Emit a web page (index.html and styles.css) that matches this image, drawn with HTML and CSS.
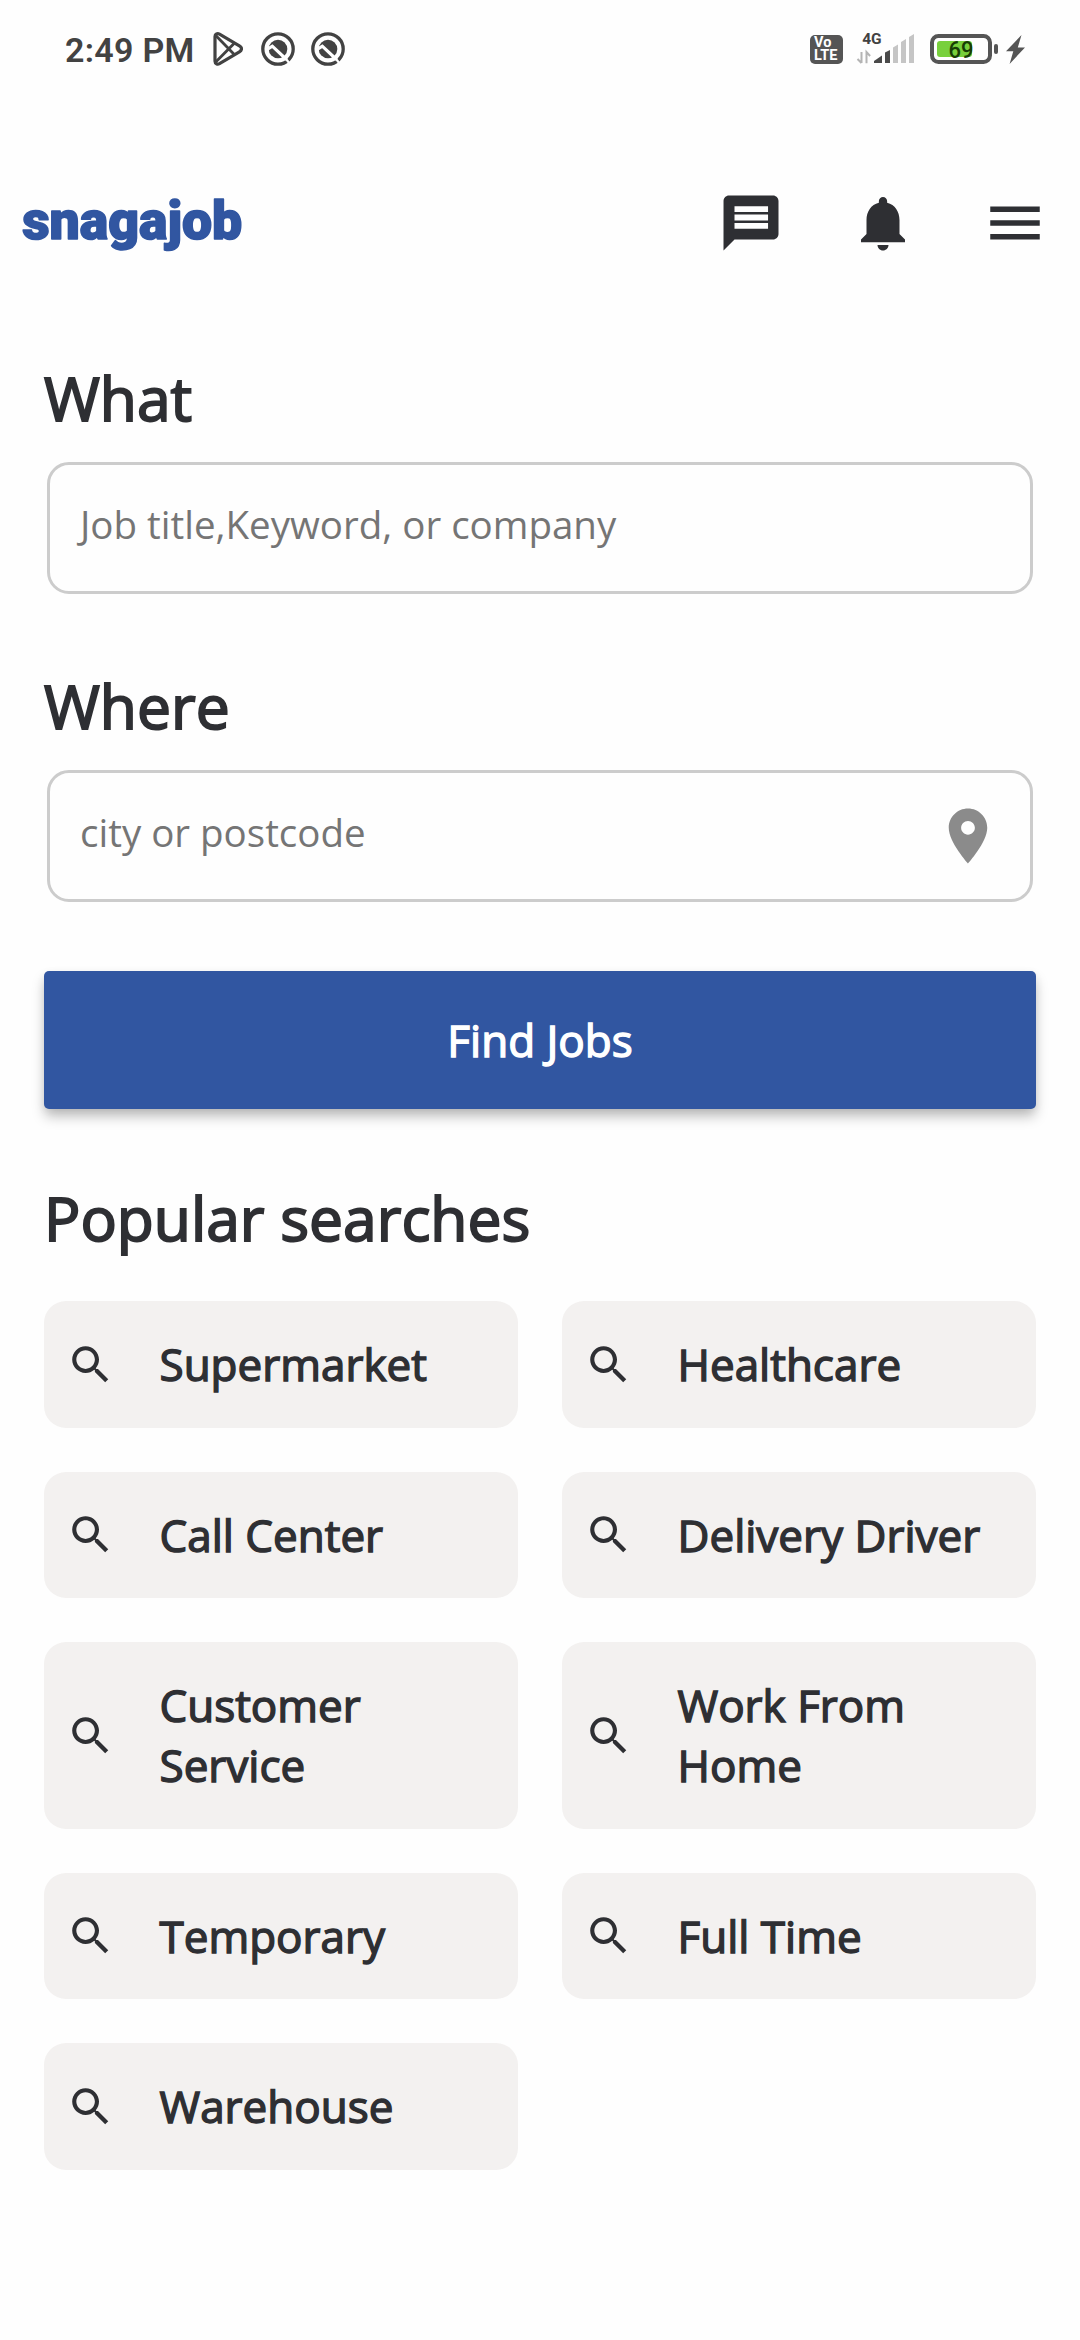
FILE: index.html
```html
<!DOCTYPE html>
<html lang="en">
<head>
<meta charset="utf-8">
<title>Snagajob</title>
<link rel="stylesheet" href="styles.css">
</head>
<body>
<svg class="defs" width="0" height="0" aria-hidden="true">
  <symbol id="search" viewBox="0 0 24 24"><path d="M15.5 14h-.79l-.28-.27C15.41 12.59 16 11.11 16 9.5 16 5.91 13.09 3 9.5 3S3 5.91 3 9.5 5.91 16 9.5 16c1.61 0 3.09-.59 4.23-1.57l.27.28v.79l5 4.99L20.49 19l-4.99-5zm-6 0C7.01 14 5 11.99 5 9.5S7.01 5 9.5 5 14 7.01 14 9.5 11.99 14 9.5 14z"/></symbol>
  <symbol id="appmark" viewBox="0 0 34 34">
    <circle cx="17" cy="17" r="15.200" fill="none" stroke="#424242" stroke-width="3.300"/>
    <circle cx="17" cy="17" r="9.300" fill="#424242"/>
    <path d="M5 18.200L11.300 14.200 25.500 27.500" fill="none" stroke="#fefefe" stroke-width="3.200"/>
    <path d="M24 25.500L28.500 31.500" stroke="#fefefe" stroke-width="2.200"/>
  </symbol>
</svg>

<div class="statusbar">
  <div class="status-left">
    <span class="time">2:49 PM</span>
    <svg class="play" viewBox="0 0 30 34" fill="none" stroke="#424242" stroke-width="3.200" stroke-linejoin="round">
      <path d="M2 4.500C2 2 4.400 1 6.500 2.100L26.400 13.800C29.200 15.400 29.200 18.200 26.400 19.800L6.500 31.600C4.400 32.700 2 31.600 2 29.200z"/>
      <path d="M3 3.800L21.300 22.400M3 29.800L21.300 11.200" stroke-width="2.800"/>
    </svg>
    <svg class="mark"><use href="#appmark"/></svg>
    <svg class="mark"><use href="#appmark"/></svg>
  </div>
  <div class="status-right">
    <div class="volte"><span>Vo</span><span>LTE</span></div>
    <svg class="signal" viewBox="0 0 58 34">
      <text x="5.200" y="12.200" class="net">4G</text>
      <path d="M4.500 20v11M0.500 27l4 4" stroke="#b4b4b4" stroke-width="2" fill="none"/>
      <path d="M9.500 31.200V20l3.600 4" stroke="#b4b4b4" stroke-width="2" fill="none"/>
      <path d="M17 31v-2l8-5.500v7.500z" fill="#4a4a4a"/>
      <path d="M28 31V20.500l5-2.500v13z" fill="#4a4a4a"/>
      <path d="M36 31V15.500l5-3v18.500zM44 31V10l5-3v24zM52 31V5l5-3v29z" fill="#c5c5c5"/>
    </svg>
    <svg class="battery" viewBox="0 0 68 30">
      <rect x="2" y="2" width="58" height="26" rx="6.500" fill="none" stroke="#555" stroke-width="4"/>
      <rect x="7" y="7" width="35" height="16" rx="3" fill="#78d03c"/>
      <rect x="64" y="10" width="4" height="10" rx="2" fill="#555"/>
      <text x="18.500" y="23.700" class="level" textLength="25" lengthAdjust="spacingAndGlyphs">69</text>
    </svg>
    <svg class="bolt" viewBox="0 0 19 29"><path d="M15.500 0L0 16.300h7.300L3.600 29 19 12.400h-7.200z" fill="#555"/></svg>
  </div>
</div>

<header class="header">
  <svg class="logo" viewBox="0 0 224 60"><text x="1.200" y="45.500" textLength="220" lengthAdjust="spacingAndGlyphs">snagajob</text></svg>
  <nav class="actions">
    <svg class="icon" viewBox="0 0 24 24"><path d="M20 2H4c-1.100 0-1.990.9-1.990 2L2 22l4-4h14c1.100 0 2-.9 2-2V4c0-1.100-.9-2-2-2z"/><path fill="#fefefe" d="M6 5.900h12.200V8H6zM6 8.950h12.200v2.100H6zM6 12h12.200v2.100H6z"/></svg>
    <svg class="icon" viewBox="0 0 24 24"><path d="M12 22c1.100 0 2-.9 2-2h-4c0 1.100.89 2 2 2zm6-6v-5c0-3.070-1.640-5.640-4.500-6.320V4c0-.83-.67-1.500-1.500-1.500s-1.500.67-1.500 1.500v.68C7.630 5.360 6 7.920 6 11v5l-2 2v1h16v-1l-2-2z"/></svg>
    <svg class="icon" viewBox="0 0 24 24"><path d="M3 18h18v-2H3v2zm0-5h18v-2H3v2zm0-7v2h18V6H3z"/></svg>
  </nav>
</header>

<main class="main">
  <section class="field">
    <h2 class="heading">What</h2>
    <div class="input"><span>Job title,Keyword, or company</span></div>
  </section>
  <section class="field">
    <h2 class="heading">Where</h2>
    <div class="input"><span>city or postcode</span>
      <svg class="pin" viewBox="0 0 24 24"><path d="M12 2C8.130 2 5 5.130 5 9c0 5.250 7 13 7 13s7-7.750 7-13c0-3.870-3.130-7-7-7zm0 9.500c-1.380 0-2.500-1.120-2.500-2.500s1.120-2.500 2.500-2.500 2.500 1.120 2.500 2.500-1.120 2.500-2.500 2.500z"/></svg>
    </div>
  </section>
  <button class="find">Find Jobs</button>
  <h2 class="heading">Popular searches</h2>
  <div class="chips">
    <a class="chip"><svg><use href="#search"/></svg><span>Supermarket</span></a>
    <a class="chip"><svg><use href="#search"/></svg><span>Healthcare</span></a>
    <a class="chip"><svg><use href="#search"/></svg><span>Call Center</span></a>
    <a class="chip"><svg><use href="#search"/></svg><span>Delivery Driver</span></a>
    <a class="chip"><svg><use href="#search"/></svg><span>Customer Service</span></a>
    <a class="chip"><svg><use href="#search"/></svg><span>Work From Home</span></a>
    <a class="chip"><svg><use href="#search"/></svg><span>Temporary</span></a>
    <a class="chip"><svg><use href="#search"/></svg><span>Full Time</span></a>
    <a class="chip"><svg><use href="#search"/></svg><span>Warehouse</span></a>
  </div>
</main>
</body>
</html>
```
FILE: styles.css
```css
* { box-sizing: border-box; }

body {
  margin: 0;
  width: 1080px;
  min-height: 2340px;
  background: #fefefe;
  color: #2e2f33;
  font-family: "Open Sans", sans-serif;
}

svg { display: block; flex: none; }
.defs { height: 0; }

/* Status bar */
.statusbar {
  display: flex;
  justify-content: space-between;
  height: 100px;
  padding: 32px 55px 0 65px;
  font-family: Roboto, sans-serif;
  color: #424242;
}
.status-left, .status-right { display: flex; align-items: flex-start; }
.time {
  width: 148px;
  font-size: 34px;
  font-weight: 600;
  line-height: 36px;
  letter-spacing: 0.3px;
  white-space: nowrap;
}
.play { width: 30px; height: 34px; margin-right: 18px; }
.mark { width: 34px; height: 34px; margin-right: 16px; }
.volte {
  display: flex;
  flex-direction: column;
  width: 33px;
  height: 29px;
  margin: 3px 14px 0 0;
  padding: 1px 0 0 4px;
  border-radius: 5px;
  background: #555;
  color: #fff;
  font-size: 14.500px;
  font-weight: 700;
  line-height: 13px;
}
.signal { width: 58px; height: 34px; margin-right: 15px; overflow: visible; }
.net { font: 700 15.500px Roboto, sans-serif; fill: #424242; }
.battery { width: 68px; height: 30px; margin: 2px 8px 0 0; }
.level { font: 500 23.500px Roboto, sans-serif; fill: #173d05; }
.bolt { width: 19px; height: 29px; margin-top: 3px; }

/* Header */
.header {
  display: flex;
  justify-content: space-between;
  align-items: center;
  height: 246px;
  padding: 0 32px 0 21px;
}
.logo { width: 224px; height: 60px; overflow: visible; }
.logo text {
  font: 900 54px Roboto, sans-serif;
  fill: #3156a1;
  stroke: #3156a1;
  stroke-width: 1.600px;
  stroke-linejoin: round;
}
.actions { display: flex; gap: 66px; }
.icon { width: 66px; height: 66px; fill: #2e2f33; }

/* Search form */
.main { padding: 11px 44px 0; }
.field { height: 308px; }
.heading {
  margin: 0 0 23px;
  font-size: 60.500px;
  font-weight: 400;
  line-height: 82px;
  -webkit-text-stroke: 1.900px currentColor;
}
.input {
  display: flex;
  justify-content: space-between;
  height: 132px;
  margin: 0 3px;
  padding: 29px 29px 29px 30px;
  border: 3px solid #ccc;
  border-radius: 22px;
  color: #757575;
  font-size: 38.500px;
  line-height: 60px;
}
.pin { width: 66px; height: 66px; margin-top: 1px; fill: #8b8b8b; }
.find {
  display: block;
  width: 100%;
  height: 138px;
  margin: -2px 0 68px;
  border: 0;
  border-radius: 5px;
  background: #3156a1;
  color: #fff;
  font: 400 44px/60px "Open Sans", sans-serif;
  -webkit-text-stroke: 1.400px #fff;
  box-shadow: 0 8px 13px -1px rgba(0, 0, 0, 0.27), 0 2px 9px rgba(0, 0, 0, 0.05);
}

/* Popular searches */
.chips {
  display: grid;
  grid-template-columns: 1fr 1fr;
  gap: 44px;
  margin-top: 42px;
}
.chip {
  display: flex;
  align-items: center;
  gap: 44px;
  min-height: 126.500px;
  padding: 33px 22px;
  border-radius: 22px;
  background: #f3f1f0;
  font-size: 44px;
  line-height: 60.250px;
  -webkit-text-stroke: 1.400px currentColor;
}
.chip svg { width: 49.500px; height: 49.500px; fill: #2e2f33; -webkit-text-stroke: 0; }
```
